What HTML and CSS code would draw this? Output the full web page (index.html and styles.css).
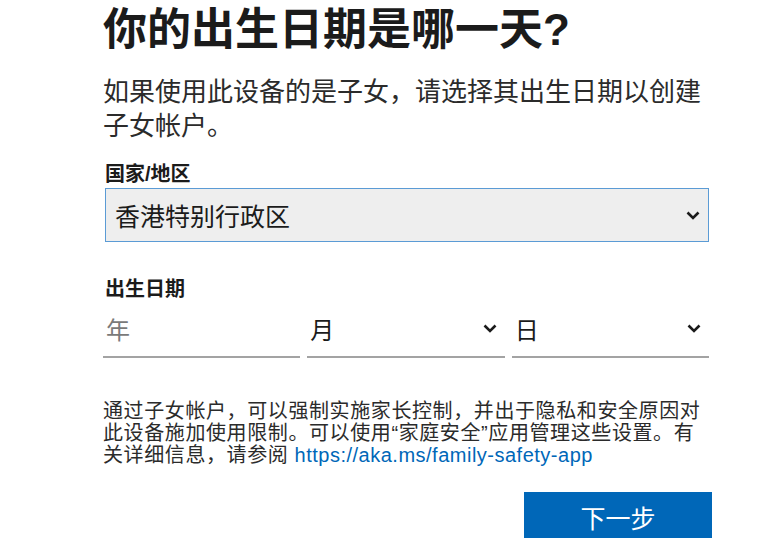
FILE: index.html
```html
<!DOCTYPE html>
<html lang="zh-CN">
<head>
<meta charset="UTF-8" />
<meta name="viewport" content="width=device-width, initial-scale=1" />
<title>你的出生日期是哪一天?</title>
<link rel="stylesheet" href="styles.css">
</head>
<body>

<div class="page">
  <h1>你的出生日期是哪一天?</h1>

  <p class="intro">如果使用此设备的是子女，请选择其出生日期以创建子女帐户。</p>

  <div class="label">国家/地区</div>
  <div class="select">
    <span>香港特别行政区</span>
    <svg class="chev" width="14" height="9" viewBox="0 0 14 9"><path d="M1.5 1.5 L7 7 L12.5 1.5" fill="none" stroke="#1b1b1b" stroke-width="2.6"/></svg>
  </div>

  <div class="label dob">出生日期</div>
  <div class="date-row">
    <div class="field"><span class="placeholder">年</span></div>
    <div class="field">
      <span>月</span>
      <svg class="chev" width="14" height="9" viewBox="0 0 14 9"><path d="M1.5 1.5 L7 7 L12.5 1.5" fill="none" stroke="#1b1b1b" stroke-width="2.6"/></svg>
    </div>
    <div class="field">
      <span>日</span>
      <svg class="chev" width="14" height="9" viewBox="0 0 14 9"><path d="M1.5 1.5 L7 7 L12.5 1.5" fill="none" stroke="#1b1b1b" stroke-width="2.6"/></svg>
    </div>
  </div>

  <p class="note">通过子女帐户，可以强制实施家长控制，并出于隐私和安全原因对此设备施加使用限制。可以使用“家庭安全”应用管理这些设置。有关详细信息，请参阅 <a href="#">https://aka.ms/family-safety-app</a></p>

  <div class="actions">
    <button class="next">下一步</button>
  </div>
</div>

</body>
</html>
```

FILE: styles.css
```css
body, html {
  margin: 0;
  padding: 0;
  background: #ffffff;
  color: #1b1b1b;
  font-family: "Liberation Sans", "Noto Sans CJK SC", sans-serif;
  overflow: hidden;
}

.page {
  width: 606px;
  padding-left: 103px;
}

h1 {
  margin: 4px 0 0;
  font-size: 44px;
  line-height: 52px;
  font-weight: 700;
}

.intro {
  margin: 19px 0 0;
  font-size: 26px;
  line-height: 34px;
  color: #2b2b2b;
}

.label {
  margin-top: 19px;
  padding-left: 2px;
  font-size: 20px;
  line-height: 24px;
  font-weight: 700;
}
.label.dob {
  margin-top: 35px;
}

.select {
  margin-top: 2px;
  margin-left: 2px;
  height: 52px;
  border: 1px solid #5b9bd5;
  background: #eeeeee;
  display: flex;
  align-items: center;
  justify-content: space-between;
  padding: 0 8px 0 9px;
  font-size: 25px;
}

.date-row {
  display: grid;
  grid-template-columns: 1fr 1fr 1fr;
  gap: 7px;
  height: 57px;
}

.field {
  border-bottom: 2px solid #a3a3a3;
  display: flex;
  align-items: center;
  justify-content: space-between;
  padding: 0 8px 0 3px;
  font-size: 24px;
}
.placeholder {
  color: #7a7a7a;
}

.note {
  margin: 42px 0 0;
  font-size: 20px;
  letter-spacing: 0.6px;
  line-height: 22px;
  color: #2b2b2b;
}
.note a {
  color: #0067b8;
  text-decoration: none;
  letter-spacing: 0.5px;
}

.actions {
  display: flex;
  justify-content: flex-end;
  margin-top: 26px;
  margin-right: -3px;
}

.next {
  width: 188px;
  height: 60px;
  border: 0;
  background: #0067b8;
  color: #ffffff;
  font-family: inherit;
  font-size: 25px;
  padding: 0 0 10px;
}
```
